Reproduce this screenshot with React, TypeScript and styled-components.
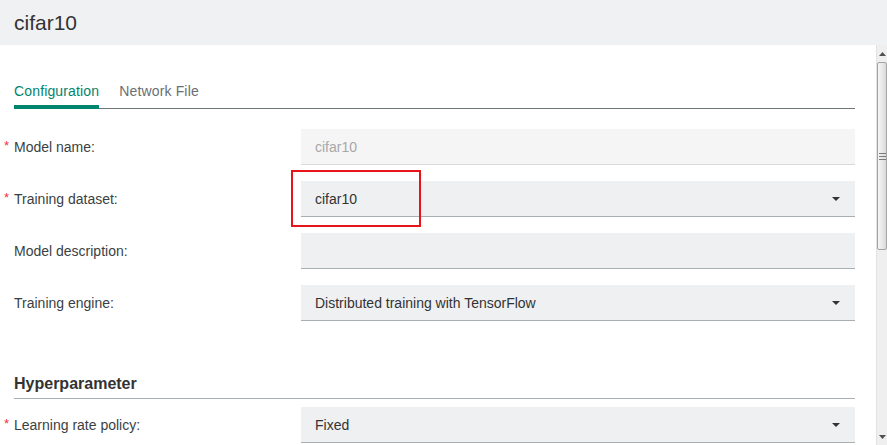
import React from "react";
import styled, { createGlobalStyle } from "styled-components";

const GlobalStyle = createGlobalStyle`
  html, body {
    margin: 0;
    padding: 0;
    overflow: hidden;
    background: #fff;
  }
  body {
    font-family: "Liberation Sans", Arial, sans-serif;
    color: #333;
  }
  * {
    box-sizing: border-box;
  }
`;

type Row = {
  label: string;
  required?: boolean;
  value?: string;
  select?: boolean;
  disabled?: boolean;
  marked?: boolean;
};

const mainRows: Row[] = [
  { label: "Model name:", required: true, value: "cifar10", disabled: true },
  { label: "Training dataset:", required: true, value: "cifar10", select: true, marked: true },
  { label: "Model description:" },
  { label: "Training engine:", value: "Distributed training with TensorFlow", select: true },
];

const hyperRows: Row[] = [
  { label: "Learning rate policy:", required: true, value: "Fixed", select: true },
];

const FormRow = ({ row }: { row: Row }) => (
  <RowWrap>
    <Label>
      <Required>{row.required ? "*" : ""}</Required>
      {row.label}
    </Label>
    <Control>
      <Field disabled={row.disabled}>
        <span>{row.value}</span>
        {row.select && <Caret />}
      </Field>
      {row.marked && <Marker />}
    </Control>
  </RowWrap>
);

const App = () => {
  return (
    <Page>
      <GlobalStyle />
      <Header>cifar10</Header>
      <Body>
        <Content>
          <TabBar>
            <Tab active>Configuration</Tab>
            <Tab>Network File</Tab>
          </TabBar>
          <Form>
            {mainRows.map((r) => (
              <FormRow key={r.label} row={r} />
            ))}
          </Form>
          <SectionTitle>Hyperparameter</SectionTitle>
          <Form tight>
            {hyperRows.map((r) => (
              <FormRow key={r.label} row={r} />
            ))}
          </Form>
        </Content>
        <ScrollTrack>
          <ArrowBtn>
            <svg width="7" height="4" viewBox="0 0 7 4">
              <path d="M0 4 L3.5 0 L7 4 Z" fill="#505050" />
            </svg>
          </ArrowBtn>
          <Thumb>
            <svg width="7" height="7" viewBox="0 0 7 7">
              <path d="M0 0.5 H7 M0 3.5 H7 M0 6.5 H7" stroke="#7a7a7a" strokeWidth="1" />
            </svg>
          </Thumb>
          <TrackFill />
          <ArrowBtn>
            <svg width="7" height="4" viewBox="0 0 7 4">
              <path d="M0 0 L7 0 L3.5 4 Z" fill="#505050" />
            </svg>
          </ArrowBtn>
        </ScrollTrack>
      </Body>
    </Page>
  );
};

export default App;

const Page = styled.div`
  width: 887px;
  height: 445px;
  display: flex;
  flex-direction: column;
  overflow: hidden;
`;

const Header = styled.div`
  height: 45px;
  flex-shrink: 0;
  background: #f0f1f3;
  display: flex;
  align-items: center;
  padding-left: 14px;
  font-size: 21px;
  color: #333;
`;

const Body = styled.div`
  flex: 1;
  display: flex;
  min-height: 0;
`;

const Content = styled.div`
  flex: 1;
  padding: 0 21px 0 14px;
  overflow: hidden;
`;

const TabBar = styled.div`
  margin-top: 36px;
  display: flex;
  gap: 20px;
  border-bottom: 1px solid #6f7678;
`;

const Tab = styled.div<{ active?: boolean }>`
  font-size: 14px;
  line-height: 20px;
  letter-spacing: 0.15px;
  padding-bottom: 4px;
  margin-bottom: -1px;
  border-bottom: 4px solid ${({ active }) => (active ? "#00856f" : "transparent")};
  color: ${({ active }) => (active ? "#00856f" : "#6b6f72")};
`;

const Form = styled.div<{ tight?: boolean }>`
  margin-top: ${({ tight }) => (tight ? "8px" : "20px")};
  display: flex;
  flex-direction: column;
  gap: 16px;
`;

const RowWrap = styled.div`
  display: grid;
  grid-template-columns: 287px 1fr;
  align-items: center;
`;

const Label = styled.div`
  display: flex;
  font-size: 14px;
  color: #3a3f44;
`;

const Required = styled.span`
  width: 10px;
  margin-left: -10px;
  color: #f0323c;
  font-size: 13px;
  line-height: 13px;
`;

const Control = styled.div`
  position: relative;
`;

const Field = styled.div<{ disabled?: boolean }>`
  height: 36px;
  display: flex;
  align-items: center;
  justify-content: space-between;
  padding: 0 15px 0 14px;
  font-size: 14px;
  background: ${({ disabled }) => (disabled ? "#f5f5f5" : "#eff0f2")};
  border-bottom: 1px solid ${({ disabled }) => (disabled ? "#d9d9d9" : "#a9b0b3")};
  color: ${({ disabled }) => (disabled ? "#a8a8a8" : "#333")};
`;

const Caret = styled.span`
  width: 0;
  height: 0;
  border-left: 4px solid transparent;
  border-right: 4px solid transparent;
  border-top: 4px solid #333;
`;

const Marker = styled.div`
  position: absolute;
  left: -10px;
  top: -11px;
  width: 130px;
  height: 57px;
  border: 2px solid #e8141a;
  pointer-events: none;
`;

const SectionTitle = styled.div`
  margin-top: 53px;
  font-size: 16px;
  font-weight: bold;
  line-height: 20px;
  padding-bottom: 4px;
  border-bottom: 1px solid #a9b0b3;
  color: #333;
`;

const ScrollTrack = styled.div`
  width: 11px;
  flex-shrink: 0;
  display: flex;
  flex-direction: column;
  background: #efefef;
  border-left: 1px solid #e2e2e2;
`;

const ArrowBtn = styled.div`
  height: 17px;
  display: flex;
  align-items: center;
  justify-content: center;
`;

const Thumb = styled.div`
  height: 188px;
  border: 1px solid #a3a3a3;
  border-radius: 2px;
  background: linear-gradient(to right, #f6f6f6, #dadada);
  display: flex;
  align-items: center;
  justify-content: center;
`;

const TrackFill = styled.div`
  flex: 1;
`;
